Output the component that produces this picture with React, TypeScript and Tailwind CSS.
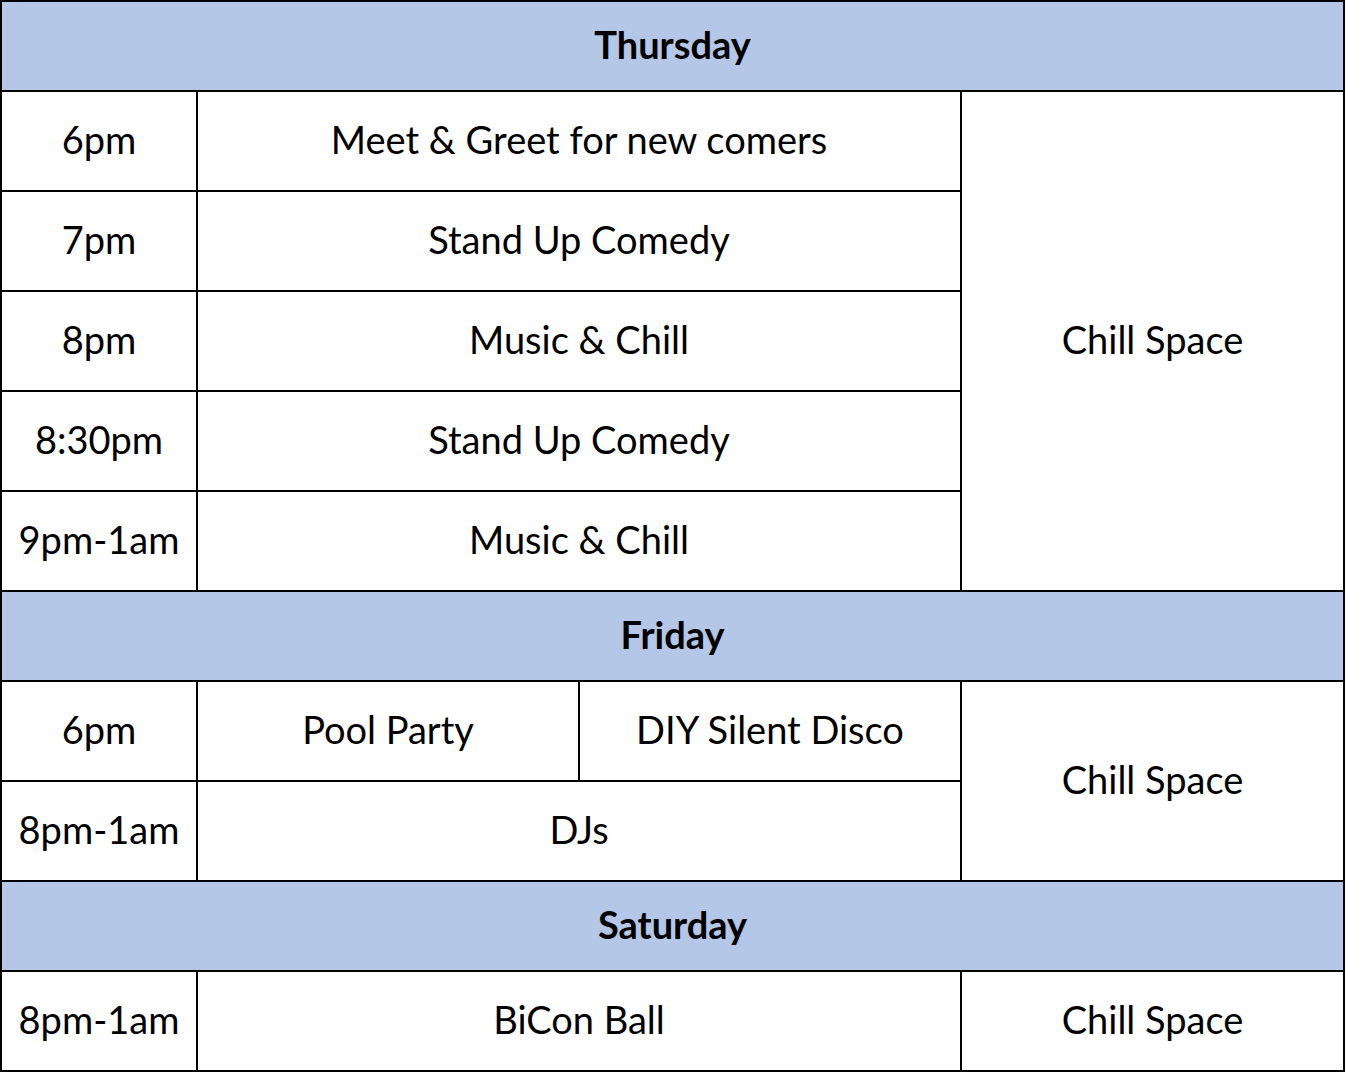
const font = { fontFamily: 'Lato, "Open Sans", sans-serif' };

function Day({ name }: { name: string }) {
  return (
    <tr className="h-[90px]">
      <td colSpan={4} className="border-2 border-black bg-[#b4c7e7] pb-1 text-center text-[38px] font-bold">
        {name}
      </td>
    </tr>
  );
}

const cell = 'border-2 border-black pb-1 text-center text-[38px]';

export default function App() {
  return (
    <div className="bg-white w-[1345px] h-[1073px]" style={font}>
      <table className="table-fixed border-collapse w-[1343px] text-black">
        <colgroup>
          <col className="w-[196px]" />
          <col className="w-[382px]" />
          <col className="w-[382px]" />
          <col className="w-[383px]" />
        </colgroup>
        <tbody>
          <Day name="Thursday" />
          <tr className="h-[100px]">
            <td className={cell}>6pm</td>
            <td colSpan={2} className={cell}>Meet &amp; Greet for new comers</td>
            <td rowSpan={5} className={cell}>Chill Space</td>
          </tr>
          <tr className="h-[100px]">
            <td className={cell}>7pm</td>
            <td colSpan={2} className={cell}>Stand Up Comedy</td>
          </tr>
          <tr className="h-[100px]">
            <td className={cell}>8pm</td>
            <td colSpan={2} className={cell}>Music &amp; Chill</td>
          </tr>
          <tr className="h-[100px]">
            <td className={cell}>8:30pm</td>
            <td colSpan={2} className={cell}>Stand Up Comedy</td>
          </tr>
          <tr className="h-[100px]">
            <td className={cell}>9pm-1am</td>
            <td colSpan={2} className={cell}>Music &amp; Chill</td>
          </tr>
          <Day name="Friday" />
          <tr className="h-[100px]">
            <td className={cell}>6pm</td>
            <td className={cell}>Pool Party</td>
            <td className={cell}>DIY Silent Disco</td>
            <td rowSpan={2} className={cell}>Chill Space</td>
          </tr>
          <tr className="h-[100px]">
            <td className={cell}>8pm-1am</td>
            <td colSpan={2} className={cell}>DJs</td>
          </tr>
          <Day name="Saturday" />
          <tr className="h-[100px]">
            <td className={cell}>8pm-1am</td>
            <td colSpan={2} className={cell}>BiCon Ball</td>
            <td className={cell}>Chill Space</td>
          </tr>
        </tbody>
      </table>
    </div>
  );
}
